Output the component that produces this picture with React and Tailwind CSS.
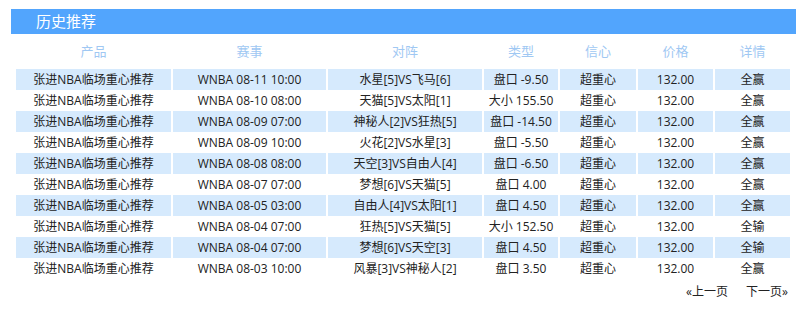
const rows = [
  ['张进NBA临场重心推荐', 'WNBA 08-11 10:00', '水星[5]VS飞马[6]', '盘口 -9.50', '超重心', '132.00', '全赢'],
  ['张进NBA临场重心推荐', 'WNBA 08-10 08:00', '天猫[5]VS太阳[1]', '大小 155.50', '超重心', '132.00', '全赢'],
  ['张进NBA临场重心推荐', 'WNBA 08-09 07:00', '神秘人[2]VS狂热[5]', '盘口 -14.50', '超重心', '132.00', '全赢'],
  ['张进NBA临场重心推荐', 'WNBA 08-09 10:00', '火花[2]VS水星[3]', '盘口 -5.50', '超重心', '132.00', '全赢'],
  ['张进NBA临场重心推荐', 'WNBA 08-08 08:00', '天空[3]VS自由人[4]', '盘口 -6.50', '超重心', '132.00', '全赢'],
  ['张进NBA临场重心推荐', 'WNBA 08-07 07:00', '梦想[6]VS天猫[5]', '盘口 4.00', '超重心', '132.00', '全赢'],
  ['张进NBA临场重心推荐', 'WNBA 08-05 03:00', '自由人[4]VS太阳[1]', '盘口 4.50', '超重心', '132.00', '全赢'],
  ['张进NBA临场重心推荐', 'WNBA 08-04 07:00', '狂热[5]VS天猫[5]', '大小 152.50', '超重心', '132.00', '全输'],
  ['张进NBA临场重心推荐', 'WNBA 08-04 07:00', '梦想[6]VS天空[3]', '盘口 4.50', '超重心', '132.00', '全输'],
  ['张进NBA临场重心推荐', 'WNBA 08-03 10:00', '风暴[3]VS神秘人[2]', '盘口 3.50', '超重心', '132.00', '全赢'],
];

const heads = ['产品', '赛事', '对阵', '类型', '信心', '价格', '详情'];

const App = () => {
  return (
    <div className="w-[810px] h-[310px] bg-white pt-[9px] font-['Open_Sans','Noto_Sans_CJK_SC',sans-serif]">
      {/* Title bar */}
      <div className="ml-[11px] w-[785px] h-[25px] bg-[#52a5fd] flex items-center pl-[25px]">
        <span className="text-white text-[15px] leading-none">历史推荐</span>
      </div>

      {/* Table */}
      <div className="ml-[16px] mt-[1px] grid grid-cols-[155px_153px_154px_74px_76px_75px_75px] gap-x-[2px]">
        {heads.map((h) => (
          <div key={h} className="h-[34px] flex items-center justify-center text-[13px] text-[#9fc8f3]">
            {h}
          </div>
        ))}
        {rows.map((r, i) =>
          r.map((c, j) => (
            <div
              key={i + '-' + j}
              className={
                'h-[21px] flex items-center justify-center text-[12px] text-[#222] ' +
                (i % 2 === 0 ? 'bg-[#d6eafd]' : 'bg-white')
              }
            >
              {c}
            </div>
          ))
        )}
      </div>

      {/* Pager */}
      <div className="mt-[4px] w-[788px] flex justify-end gap-[18px] text-[12px] text-[#222]">
        <span>«上一页</span>
        <span>下一页»</span>
      </div>
    </div>
  );
};

export default App;
